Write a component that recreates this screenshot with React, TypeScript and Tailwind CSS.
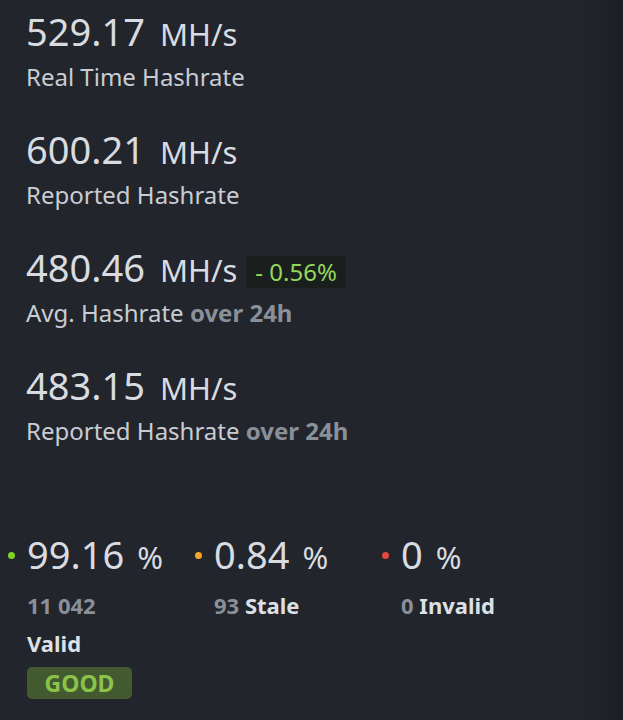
import React from "react";

const font = { fontFamily: '"Noto Sans", "Open Sans", sans-serif' };

function Metric({
  value,
  label,
  suffix,
  badge,
}: {
  value: string;
  label: string;
  suffix?: string;
  badge?: string;
}) {
  return (
    <div className="flex flex-col">
      <div className="flex items-baseline h-[44px] leading-[44px]">
        <span className="text-[38px] font-normal text-[#d8dce1]">{value}</span>
        <span className="ml-[15px] text-[31px] font-normal text-[#d8dce1]">MH/s</span>
        {badge && (
          <span className="ml-[9px] self-center mt-[10px] h-[32px] leading-[32px] px-[9px] bg-[#1a1e1d] text-[24px] text-[#93d85c] rounded-[2px]">
            {badge}
          </span>
        )}
      </div>
      <div className="mt-[8px] h-[32px] leading-[32px] text-[24px] text-[#c9cdd3] whitespace-nowrap">
        {label}
        {suffix && <span className="font-bold text-[#8a9099]"> {suffix}</span>}
      </div>
    </div>
  );
}

function Stat({
  dot,
  value,
  children,
}: {
  dot: string;
  value: string;
  children: React.ReactNode;
}) {
  return (
    <div className="flex items-start gap-[12px]">
      <span className={`mt-[20px] w-[7px] h-[7px] rounded-full ${dot}`} />
      <div className="flex flex-col">
        <div className="flex items-baseline h-[44px] leading-[44px]">
          <span className="text-[38px] font-normal text-[#d8dce1]">{value}</span>
          <span className="ml-[13px] text-[31px] font-normal text-[#d8dce1]">%</span>
        </div>
        {children}
      </div>
    </div>
  );
}

export default function App() {
  return (
    <div
      style={font}
      className="w-[623px] h-[720px] overflow-hidden bg-[linear-gradient(to_right,#22252c_93%,#1c1f24)]"
    >
      <div className="pl-[26px] pt-[9px] flex flex-col gap-[34px]">
        <Metric value="529.17" label="Real Time Hashrate" />
        <Metric value="600.21" label="Reported Hashrate" />
        <Metric value="480.46" label="Avg. Hashrate" suffix="over 24h" badge="- 0.56%" />
        <Metric value="483.15" label="Reported Hashrate" suffix="over 24h" />
      </div>
      <div className="mt-[85px] pl-[8px] grid grid-cols-[187px_187px_1fr]">
        <Stat dot="bg-[#7ed321]" value="99.16">
          <div className="mt-[14px] h-[30px] leading-[30px] text-[22px] font-bold text-[#8a9099]">11 042</div>
          <div className="mt-[8px] h-[30px] leading-[30px] text-[22px] font-bold text-[#dde0e4]">Valid</div>
          <div className="mt-[9px] w-[105px] h-[32px] leading-[32px] rounded-[5px] bg-[#435a30] text-center text-[23px] font-bold text-[#8bc34a]">
            GOOD
          </div>
        </Stat>
        <Stat dot="bg-[#f5a623]" value="0.84">
          <div className="mt-[14px] h-[30px] leading-[30px] text-[22px] font-bold whitespace-nowrap">
            <span className="text-[#8a9099]">93</span> <span className="text-[#dde0e4]">Stale</span>
          </div>
        </Stat>
        <Stat dot="bg-[#e5483f]" value="0">
          <div className="mt-[14px] h-[30px] leading-[30px] text-[22px] font-bold whitespace-nowrap">
            <span className="text-[#8a9099]">0</span> <span className="text-[#dde0e4]">Invalid</span>
          </div>
        </Stat>
      </div>
    </div>
  );
}
